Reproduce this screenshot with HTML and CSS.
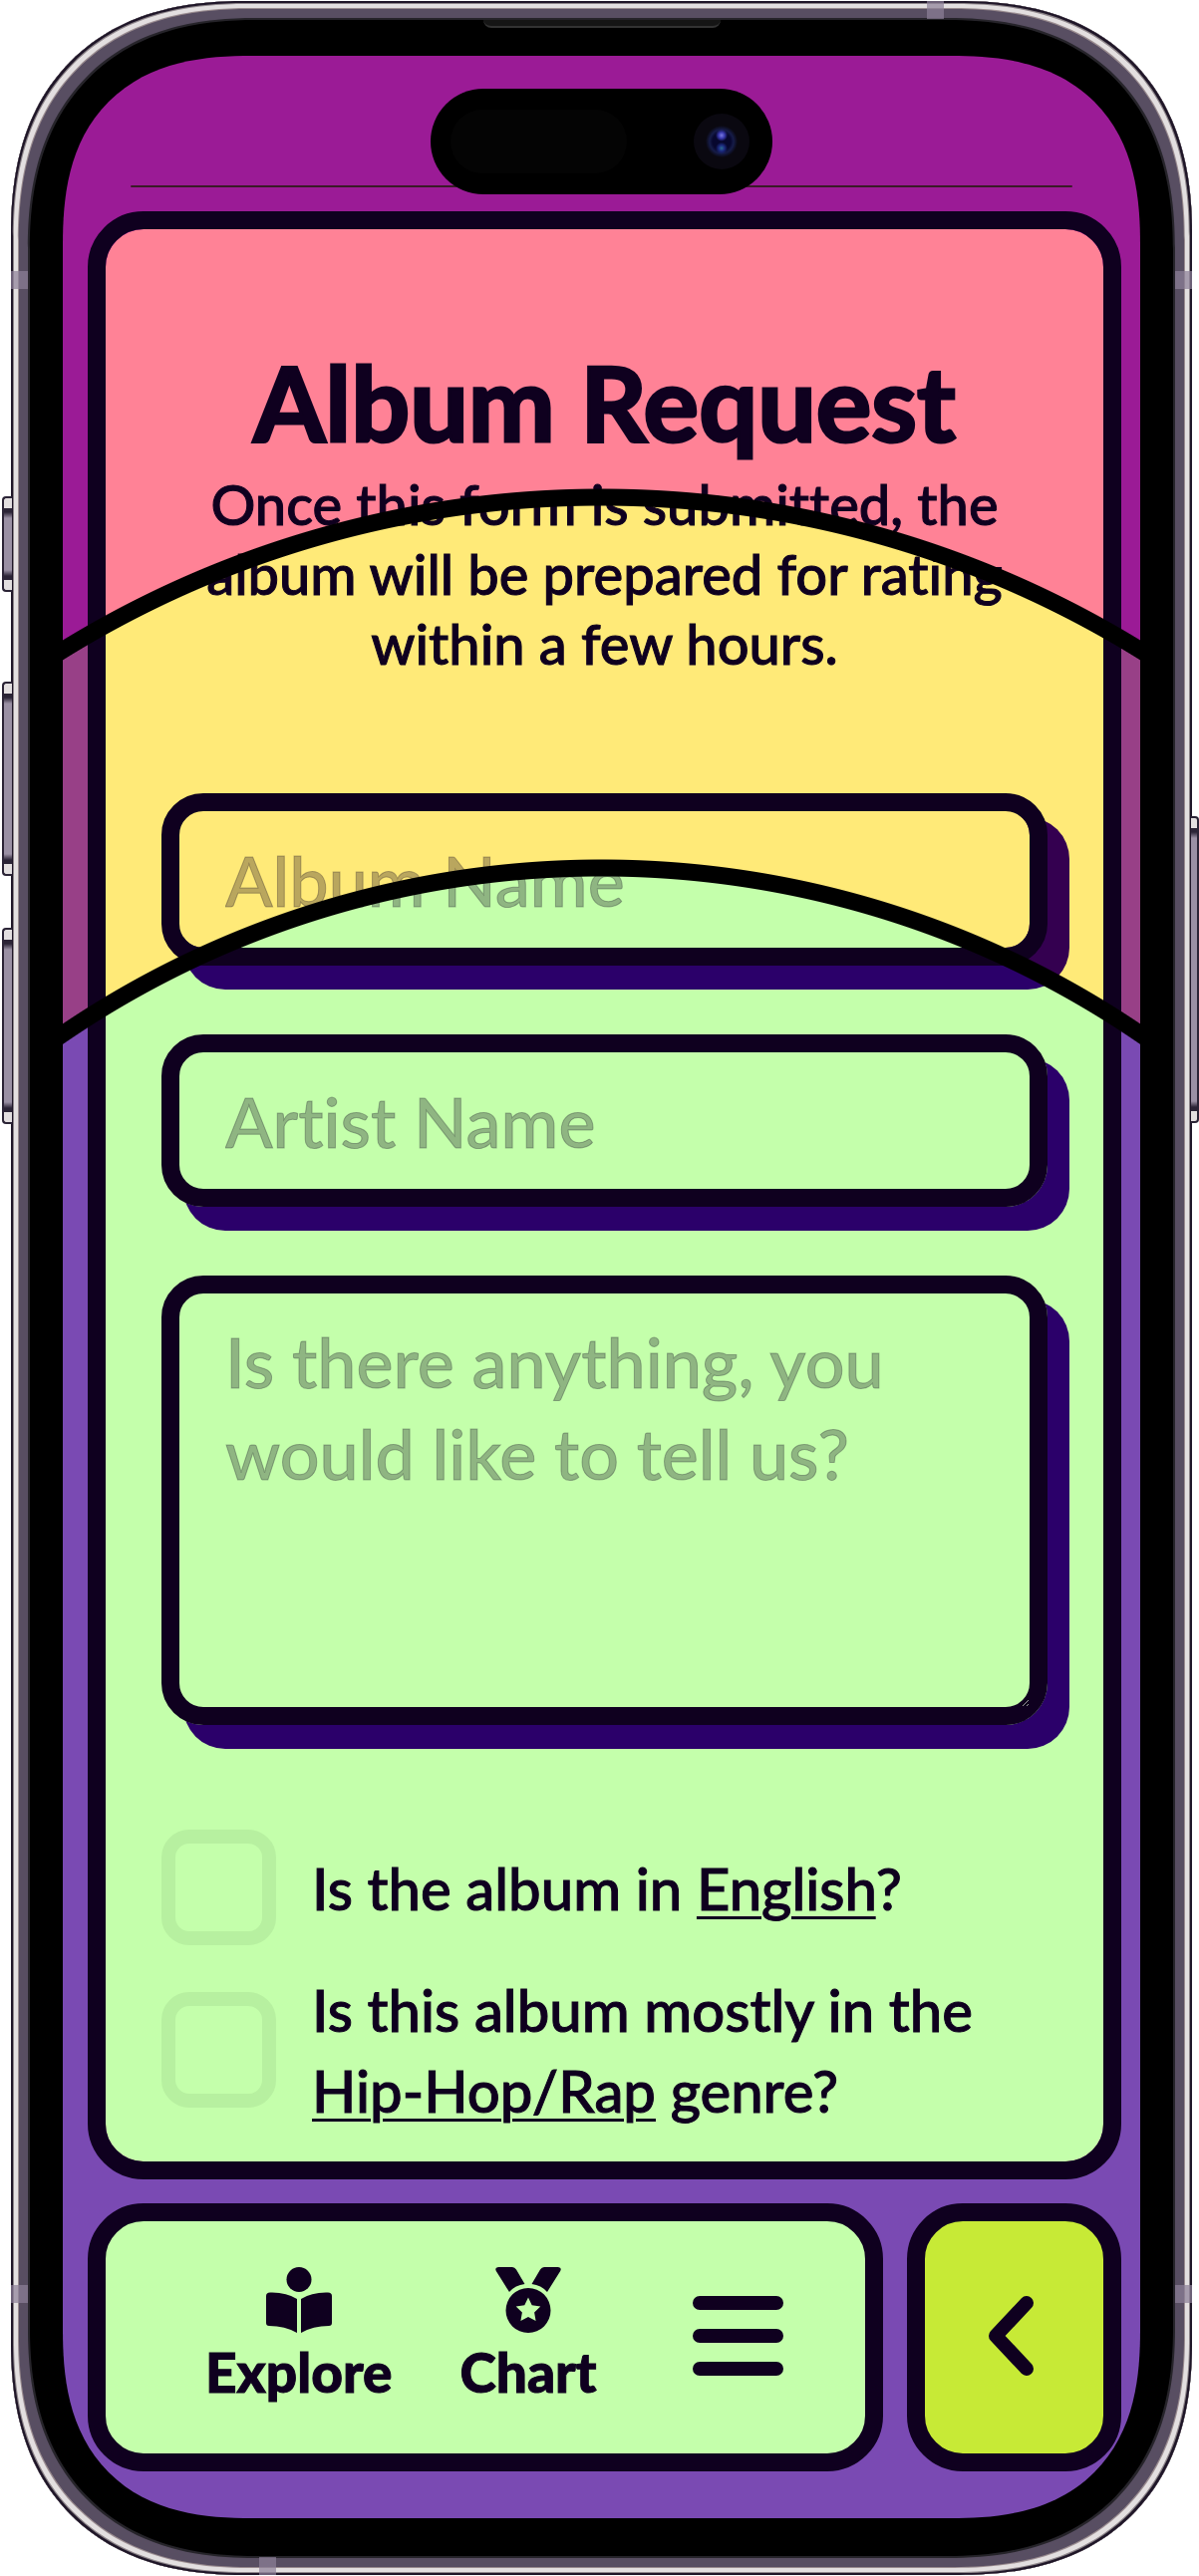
FILE: index.html
```html
<!DOCTYPE html>
<html lang="en">
<head>
<meta charset="utf-8">
<meta name="viewport" content="width=device-width, initial-scale=1">
<title>Album Request</title>
<link rel="stylesheet" href="styles.css">
</head>
<body>
<div class="device">
  <span class="key key-action"></span>
  <span class="key key-up"></span>
  <span class="key key-down"></span>
  <span class="key key-power"></span>
  <span class="band band-top"></span>
  <span class="band band-bottom"></span>
  <span class="band band-left band-upper"></span>
  <span class="band band-right band-upper"></span>
  <span class="band band-left band-lower"></span>
  <span class="band band-right band-lower"></span>
  <span class="speaker"></span>

  <div class="screen">
    <span class="status-line"></span>
    <span class="island"><span class="sensor"></span><span class="camera"></span></span>

    <main class="panel">
      <h1 class="title">Album Request</h1>
      <p class="intro">Once this form is submitted, the album will be prepared for rating within a few hours.</p>
      <form class="form">
        <div class="field field-split">
          <input class="control" type="text" placeholder="Album Name" aria-label="Album Name">
        </div>
        <div class="field">
          <input class="control" type="text" placeholder="Artist Name" aria-label="Artist Name">
        </div>
        <div class="field">
          <textarea class="control control-area" placeholder="Is there anything, you would like to tell us?" aria-label="Is there anything, you would like to tell us?"></textarea>
        </div>
        <div class="checks">
          <div class="check">
            <input class="tick" type="checkbox" id="english">
            <label for="english">Is the album in <u>English</u>?</label>
          </div>
          <div class="check">
            <input class="tick" type="checkbox" id="hiphop">
            <label for="hiphop">Is this album mostly in the <u>Hip-Hop/Rap</u> genre?</label>
          </div>
        </div>
      </form>
    </main>

    <div class="dock">
      <nav class="nav">
        <a class="nav-link" href="#explore">
          <svg class="nav-icon" viewBox="0 0 66 66" aria-hidden="true">
            <circle cx="33" cy="12.500" r="12.500"/>
            <path d="M4 25.500Q20 25 31 32V66Q19 59 3 59Q0 59 0 56V29Q0 25.500 4 25.500Z"/>
            <path d="M62 25.500Q46 25 35 32V66Q47 59 63 59Q66 59 66 56V29Q66 25.500 62 25.500Z"/>
          </svg>
          Explore
        </a>
        <a class="nav-link" href="#chart">
          <svg class="nav-icon" viewBox="0 0 66 66" aria-hidden="true">
            <path d="M3 0H17Q19.500 0 21 2.500L29.500 17Q20 18 14 25L.8 4Q-1 .5 3 0Z"/>
            <path d="M63 0H49Q46.500 0 45 2.500L36.500 17Q46 18 52 25L65.200 4Q67 .5 63 0Z"/>
            <path fill-rule="evenodd" d="M33 21A22.500 22.500 0 1 0 33 66A22.500 22.500 0 1 0 33 21ZM33 30.500L36.700 38.200L45.300 39.400L39.100 45.400L40.600 54L33 50L25.400 54L26.900 45.400L20.700 39.400L29.300 38.200Z"/>
          </svg>
          Chart
        </a>
        <button class="menu" type="button" aria-label="Menu">
          <svg class="menu-icon" viewBox="0 0 91 80" aria-hidden="true"><path d="M7 7H84M7 40H84M7 73H84"/></svg>
        </button>
      </nav>
      <button class="back" type="button" aria-label="Back">
        <svg class="back-icon" viewBox="0 0 46 80" aria-hidden="true"><path d="M39 7L8 40L39 73"/></svg>
      </button>
    </div>
    <div class="arcs"></div>
  </div>
</div>
</body>
</html>
```
FILE: styles.css
```css
:root {
  --ink: #0f001f;
  --pink: #ff8296;
  --yellow: #ffea78;
  --green: #c4ffab;
}

* { box-sizing: border-box; }

body {
  margin: 0;
  background: #fff;
  color: var(--ink);
  font-family: Lato, "Open Sans", sans-serif;
  font-weight: 500;
  font-variant-ligatures: none;
  -webkit-text-stroke: 1px;
}

/* Phone shell */
.device {
  position: relative;
  margin: 1px 7px 1px 11px;
  padding: 55px 52px 57px;
  border-radius: 205px;
  background: #000;
  box-shadow:
    inset 0 0 0 2px #1f1628,
    inset 0 0 0 3px #8c8489,
    inset 0 0 0 7px #e3dfe0,
    inset 0 0 0 8px #9a8c90,
    inset 0 0 0 17px #584e62,
    inset 0 0 0 19px #26242a;
}

.key {
  position: absolute;
  border: 2px solid #2b2436;
  background: linear-gradient(#e3dfe0 0 10px, #2b2436 10px 14px, #9a90a4 20px calc(100% - 20px), #2b2436 calc(100% - 14px) calc(100% - 10px), #e3dfe0 calc(100% - 10px));
}
.key-action, .key-up, .key-down { left: -9px; width: 10px; border-right: 0; border-radius: 4px 0 0 4px; }
.key-action { top: 497px; height: 96px; }
.key-up { top: 683px; height: 195px; }
.key-down { top: 930px; height: 197px; }
.key-power { right: -7px; top: 818px; width: 8px; height: 308px; border-left: 0; border-radius: 0 4px 4px 0; }

.band { position: absolute; background: #8d8098; opacity: .7; }
.band-top, .band-bottom { width: 17px; height: 18px; }
.band-top { top: 0; left: 919px; }
.band-bottom { bottom: 0; left: 249px; }
.band-left, .band-right { width: 17px; height: 18px; }
.band-left { left: 0; }
.band-right { right: 0; }
.band-upper { top: 271px; }
.band-lower { bottom: 273px; }

.speaker {
  position: absolute;
  top: 19px;
  left: 50%;
  width: 238px;
  height: 8px;
  margin-left: -119px;
  border-bottom: 2px solid #333;
  border-radius: 0 0 8px 8px;
  background: #151515;
}

.screen {
  position: relative;
  overflow: hidden;
  padding: 156px 19px 47px 25px;
  border-radius: 165px;
  background:
    radial-gradient(circle at 50% 1775px, #7a4ab3 960px, transparent 961px),
    radial-gradient(circle at 50% 1472px, #984087 1029px, #9b1b96 1030px);
}

/* Continuous-curvature corners */
@supports (corner-shape: superellipse(1.3)) {
  .device { border-radius: 234px; corner-shape: superellipse(1.22); }
  .screen { border-radius: 190px; corner-shape: superellipse(1.32); }
}

.status-line {
  position: absolute;
  top: 130px;
  left: 68px;
  right: 68px;
  height: 2px;
  border-radius: 2px;
  background: #3a1a28;
}

.island {
  position: absolute;
  top: 33px;
  left: 50%;
  width: 343px;
  height: 106px;
  margin-left: -172px;
  border-radius: 53px;
  background: #000;
}
.sensor { position: absolute; top: 21px; left: 20px; width: 177px; height: 64px; border-radius: 32px; background: #040404; }
.camera {
  position: absolute;
  top: 25px;
  right: 23px;
  width: 56px;
  height: 56px;
  border-radius: 50%;
  background:
    radial-gradient(circle at 50% 39%, #7a7ae0 0, #3a3ab0 3px, transparent 6px),
    radial-gradient(circle at 50% 62%, #2a6a90 0, #1c2a80 3px, transparent 6px),
    radial-gradient(circle, #07072e 9px, #161c48 12px, #0a0810 16px);
}

/* Black rings where the colour bands meet */
.arcs {
  position: absolute;
  inset: 0;
  pointer-events: none;
  background:
    radial-gradient(circle at 50% 1775px, transparent 951px, #000 952px, #000 968px, transparent 969px) 0 0 / 100% 1200px no-repeat,
    radial-gradient(circle at 50% 1472px, transparent 1020px, #000 1021px, #000 1037px, transparent 1038px) 0 0 / 100% 1200px no-repeat;
}

/* Form panel */
.panel {
  padding: 111px 56px 31px;
  border: 18px solid var(--ink);
  border-radius: 56px;
  background:
    radial-gradient(circle at calc(50% - 2px) 1601px, var(--green) 960px, transparent 961px) padding-box,
    radial-gradient(circle at calc(50% - 2px) 1298px, var(--yellow) 1029px, var(--pink) 1030px) padding-box;
}

.title {
  margin: 0 0 6px;
  font-size: 104px;
  line-height: 124px;
  font-weight: 700;
  text-align: center;
  -webkit-text-stroke: 3px;
}

.intro {
  max-width: 832px;
  margin: 0 auto 115px;
  font-size: 56px;
  line-height: 70px;
  text-align: center;
}

.form { display: flex; flex-direction: column; gap: 69px; }

.field { position: relative; z-index: 0; }

.control {
  display: block;
  width: 100%;
  height: 173px;
  padding: 0 46px;
  border: 18px solid var(--ink);
  border-radius: 42px;
  background: transparent;
  box-shadow: 22px 24px #2b006a;
  color: var(--ink);
  font: inherit;
  font-size: 70px;
  outline: 0;
}
.control::placeholder { color: rgba(14, 0, 32, .29); opacity: 1; }
.control-area { height: 451px; padding-top: 22px; line-height: 92px; }

/* The first field straddles two colour bands */
.field-split .control {
  box-shadow: none;
  background: radial-gradient(circle at calc(50% - 2px) 1017px, var(--green) 960px, var(--yellow) 961px) padding-box;
}
.field-split::before {
  content: "";
  position: absolute;
  inset: 24px -22px -24px 22px;
  z-index: -1;
  border-radius: 42px;
  background: radial-gradient(circle at calc(50% - 24px) 1011px, #2b006a 960px, #340050 961px);
}

.checks { display: flex; flex-direction: column; gap: 24px; margin-top: 36px; }
.check { display: flex; align-items: center; gap: 36px; font-size: 58px; line-height: 81px; }
.check u { text-decoration-thickness: 3px; text-underline-offset: 6px; }
.tick {
  appearance: none;
  flex: none;
  width: 115px;
  height: 116px;
  margin: 0;
  border: 14px solid #b7f0a0;
  border-radius: 28px;
}
.tick:checked { background: var(--ink); }

/* Bottom bar */
.dock { display: flex; gap: 24px; margin-top: 24px; }
.nav, .back { height: 269px; border: 18px solid var(--ink); border-radius: 56px; }
.nav {
  flex: 1;
  display: flex;
  align-items: center;
  gap: 68px;
  padding: 0 82px 4px 100px;
  background: var(--green);
}
.nav-link {
  display: flex;
  flex-direction: column;
  align-items: center;
  gap: 6px;
  color: inherit;
  font-size: 55px;
  line-height: 66px;
  font-weight: 900;
  text-decoration: none;
}
.nav-icon { width: 66px; height: 66px; fill: var(--ink); }
.menu { margin-left: auto; padding: 0; border: 0; background: none; }
.menu-icon, .back-icon {
  display: block;
  height: 80px;
  fill: none;
  stroke: var(--ink);
  stroke-width: 14px;
  stroke-linecap: round;
  stroke-linejoin: round;
}
.menu-icon { width: 91px; }
.back-icon { width: 46px; }
.back {
  display: flex;
  align-items: center;
  justify-content: center;
  width: 215px;
  padding: 0 8px 4px 0;
  background: #c7ea36;
}
```
